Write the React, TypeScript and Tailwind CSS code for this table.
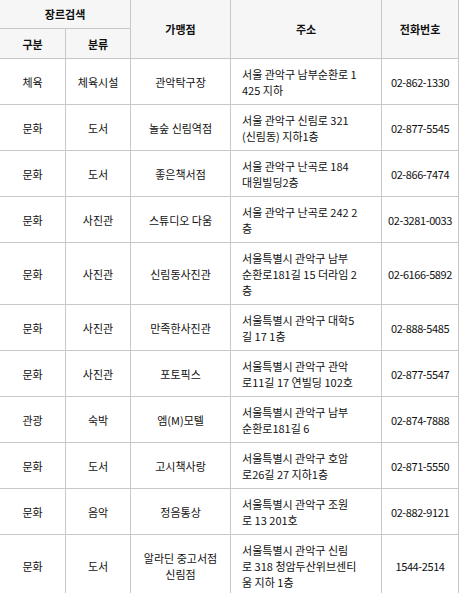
const rows = [
  { type: "체육", cat: "체육시설", name: ["관악탁구장"], addr: ["서울 관악구 남부순환로 1", "425 지하"], tel: "02-862-1330" },
  { type: "문화", cat: "도서", name: ["놀숲 신림역점"], addr: ["서울 관악구 신림로 321", "(신림동) 지하1층"], tel: "02-877-5545" },
  { type: "문화", cat: "도서", name: ["좋은책서점"], addr: ["서울 관악구 난곡로 184", "대원빌딩2층"], tel: "02-866-7474" },
  { type: "문화", cat: "사진관", name: ["스튜디오 다움"], addr: ["서울 관악구 난곡로 242 2", "층"], tel: "02-3281-0033" },
  { type: "문화", cat: "사진관", name: ["신림동사진관"], addr: ["서울특별시 관악구 남부", "순환로181길 15 더라임 2", "층"], tel: "02-6166-5892" },
  { type: "문화", cat: "사진관", name: ["만족한사진관"], addr: ["서울특별시 관악구 대학5", "길 17 1층"], tel: "02-888-5485" },
  { type: "문화", cat: "사진관", name: ["포토픽스"], addr: ["서울특별시 관악구 관악", "로11길 17 연빌딩 102호"], tel: "02-877-5547" },
  { type: "관광", cat: "숙박", name: ["엠(M)모텔"], addr: ["서울특별시 관악구 남부", "순환로181길 6"], tel: "02-874-7888" },
  { type: "문화", cat: "도서", name: ["고시책사랑"], addr: ["서울특별시 관악구 호암", "로26길 27 지하1층"], tel: "02-871-5550" },
  { type: "문화", cat: "음악", name: ["정음통상"], addr: ["서울특별시 관악구 조원", "로 13 201호"], tel: "02-882-9121" },
  { type: "문화", cat: "도서", name: ["알라딘 중고서점", "신림점"], addr: ["서울특별시 관악구 신림", "로 318 청암두산위브센티", "움 지하 1층"], tel: "1544-2514" },
];

const th = "bg-[#f6f6f6] border-r border-b border-[#c8c8c8] font-bold text-center align-middle leading-4";
const td = "border-r border-b border-[#c8c8c8] text-center align-middle leading-4 pt-[7px] pb-[6px] font-normal";

function Lines({ lines }: { lines: string[] }) {
  return (
    <>
      {lines.map((l, i) => (
        <span key={i} className="block whitespace-nowrap">
          {l}
        </span>
      ))}
    </>
  );
}

export default function App() {
  return (
    <div className="w-[459px] bg-white text-[#111] text-[11px] font-['Noto_Sans_CJK_KR','Noto_Sans',sans-serif]">
      <table className="table-fixed w-[459px] border-separate border-spacing-0">
        <colgroup>
          <col className="w-[66px]" />
          <col className="w-[65px]" />
          <col className="w-[100px]" />
          <col className="w-[151px]" />
          <col className="w-[77px]" />
        </colgroup>
        <thead>
          <tr>
            <th colSpan={2} className={`${th} py-[6px]`}>장르검색</th>
            <th rowSpan={2} className={th}>가맹점</th>
            <th rowSpan={2} className={th}>주소</th>
            <th rowSpan={2} className={th}>전화번호</th>
          </tr>
          <tr>
            <th className={`${th} pt-[7px] pb-[6px]`}>구분</th>
            <th className={`${th} pt-[7px] pb-[6px]`}>분류</th>
          </tr>
        </thead>
        <tbody>
          {rows.map((r, i) => (
            <tr key={i}>
              <td className={td}>{r.type}</td>
              <td className={td}>{r.cat}</td>
              <td className={td}>
                <Lines lines={r.name} />
              </td>
              <td className={`${td} text-left pl-[11px]`}>
                <Lines lines={r.addr} />
              </td>
              <td className={`${td} whitespace-nowrap tracking-[-0.4px]`}>{r.tel}</td>
            </tr>
          ))}
        </tbody>
      </table>
    </div>
  );
}
